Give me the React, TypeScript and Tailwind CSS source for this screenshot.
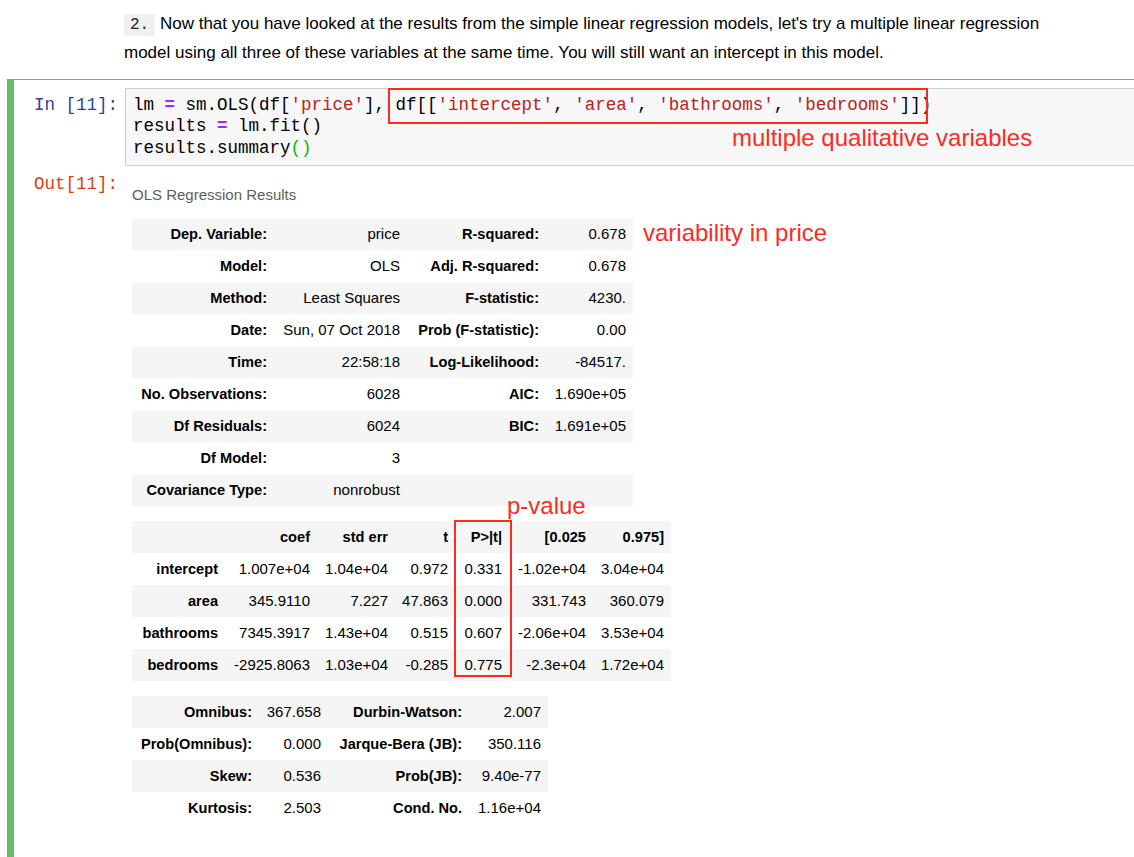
import React from "react";

const RED = "#fb2c1f";

const summaryTop: [string, string, string, string][] = [
  ["Dep. Variable:", "price", "R-squared:", "0.678"],
  ["Model:", "OLS", "Adj. R-squared:", "0.678"],
  ["Method:", "Least Squares", "F-statistic:", "4230."],
  ["Date:", "Sun, 07 Oct 2018", "Prob (F-statistic):", "0.00"],
  ["Time:", "22:58:18", "Log-Likelihood:", "-84517."],
  ["No. Observations:", "6028", "AIC:", "1.690e+05"],
  ["Df Residuals:", "6024", "BIC:", "1.691e+05"],
  ["Df Model:", "3", "", ""],
  ["Covariance Type:", "nonrobust", "", ""],
];

const coefHead = ["", "coef", "std err", "t", "P>|t|", "[0.025", "0.975]"];
const coefRows: string[][] = [
  ["intercept", "1.007e+04", "1.04e+04", "0.972", "0.331", "-1.02e+04", "3.04e+04"],
  ["area", "345.9110", "7.227", "47.863", "0.000", "331.743", "360.079"],
  ["bathrooms", "7345.3917", "1.43e+04", "0.515", "0.607", "-2.06e+04", "3.53e+04"],
  ["bedrooms", "-2925.8063", "1.03e+04", "-0.285", "0.775", "-2.3e+04", "1.72e+04"],
];

const diagRows: [string, string, string, string][] = [
  ["Omnibus:", "367.658", "Durbin-Watson:", "2.007"],
  ["Prob(Omnibus):", "0.000", "Jarque-Bera (JB):", "350.116"],
  ["Skew:", "0.536", "Prob(JB):", "9.40e-77"],
  ["Kurtosis:", "2.503", "Cond. No.", "1.16e+04"],
];

const th = "h-8 pr-[7px] text-right align-middle font-bold text-[14.6px] leading-[18px] whitespace-nowrap";
const td = "h-8 pr-[7px] text-right align-middle text-[15px] leading-[18px] whitespace-nowrap";

const Str = ({ children }: { children: React.ReactNode }) => (
  <span className="text-[#ba2121]">{children}</span>
);
const Op = ({ children }: { children: React.ReactNode }) => (
  <span className="text-[#aa22ff] font-bold">{children}</span>
);

const FourColTable = ({
  rows,
  widths,
}: {
  rows: [string, string, string, string][];
  widths: string[];
}) => (
  <table className="table-fixed border-collapse">
    <colgroup>
      {widths.map((w, i) => (
        <col key={i} className={w} />
      ))}
    </colgroup>
    <tbody>
      {rows.map((r, i) => (
        <tr key={i} className={i % 2 === 0 ? "bg-[#f5f5f5]" : "bg-white"}>
          <th className={th}>{r[0]}</th>
          <td className={td}>{r[1]}</td>
          <th className={th}>{r[2]}</th>
          <td className={td}>{r[3]}</td>
        </tr>
      ))}
    </tbody>
  </table>
);

export default function App() {
  return (
    <div className="h-[857px] overflow-hidden bg-white text-black font-['Liberation_Sans',Arial,sans-serif]">
      {/* markdown cell */}
      <p className="pl-[124px] pt-[10px] text-[17px] leading-[27px] whitespace-nowrap">
        <code className="bg-[#eff0f1] px-[6px] py-[2px] rounded-[2px] text-[16px] text-[#222] font-['Liberation_Mono',monospace]">
          2.
        </code>{" "}
        Now that you have looked at the results from the simple linear regression models, let's try a multiple linear regression
        <br />
        model using all three of these variables at the same time. You will still want an intercept in this model.
      </p>

      {/* code cell */}
      <div className="mt-[13px] ml-[7px] flex border-t border-[#66bb6a]">
        <div className="w-[7px] shrink-0 bg-[#66bb6a]" />
        <div className="flex-1 pt-[8px] pb-[60px]">
          <div className="flex">
            <div className="w-[111px] shrink-0 pr-[7px] pt-[7px] text-right font-['Liberation_Mono',monospace] text-[17.5px] leading-[21.25px] text-[#303f9f]">
              In [11]:
            </div>
            <div className="relative flex-1 rounded-l-[2px] border border-r-0 border-[#cfcfcf] bg-[#f7f7f7] px-[7px] py-[6px] font-['Liberation_Mono',monospace] text-[17.5px] leading-[21.25px] whitespace-pre">
              <div>
                lm <Op>=</Op> sm.OLS(df[<Str>'price'</Str>], df[[<Str>'intercept'</Str>, <Str>'area'</Str>,{" "}
                <Str>'bathrooms'</Str>, <Str>'bedrooms'</Str>]])
              </div>
              <div>
                results <Op>=</Op> lm.fit()
              </div>
              <div>
                results.summary<span className="text-[#00bb00]">()</span>
              </div>
              <div className="absolute left-[262px] top-[-1px] h-[36px] w-[540px] border-2 border-[#fb2c1f]" />
              <div
                className="absolute left-[606px] top-[35px] text-[24px] leading-[28px] font-['Liberation_Sans',Arial,sans-serif]"
                style={{ color: RED }}
              >
                multiple qualitative variables
              </div>
            </div>
          </div>

          <div className="mt-[8px] flex">
            <div className="w-[111px] shrink-0 pr-[7px] text-right font-['Liberation_Mono',monospace] text-[17.5px] leading-[21.25px] text-[#d84315]">
              Out[11]:
            </div>
            <div className="flex-1 pl-[7px] pt-[12px]">
              <div className="text-[15px] leading-[18px] text-[#5e5e5e]">OLS Regression Results</div>

              <div className="mt-[14px] flex items-start">
                <FourColTable rows={summaryTop} widths={["w-[142px]", "w-[133px]", "w-[139px]", "w-[87px]"]} />
                <div className="ml-[10px] mt-[1px] text-[24px] leading-[28px]" style={{ color: RED }}>
                  variability in price
                </div>
              </div>

              <div className="relative mt-[15px] w-fit">
                <table className="table-fixed border-collapse">
                  <colgroup>
                    {["w-[93px]", "w-[92px]", "w-[78px]", "w-[60px]", "w-[54px]", "w-[84px]", "w-[78px]"].map((w, i) => (
                      <col key={i} className={w} />
                    ))}
                  </colgroup>
                  <tbody>
                    <tr className="bg-[#f5f5f5]">
                      {coefHead.map((h, i) => (
                        <th key={i} className={th}>
                          {h}
                        </th>
                      ))}
                    </tr>
                    {coefRows.map((r, i) => (
                      <tr key={i} className={i % 2 === 0 ? "bg-white" : "bg-[#f5f5f5]"}>
                        <th className={th}>{r[0]}</th>
                        {r.slice(1).map((c, j) => (
                          <td key={j} className={td}>
                            {c}
                          </td>
                        ))}
                      </tr>
                    ))}
                  </tbody>
                </table>
                <div className="absolute left-[322px] top-[-1px] h-[157px] w-[58px] border-2 border-[#fb2c1f]" />
                <div className="absolute left-[375px] top-[-29px] text-[24px] leading-[28px]" style={{ color: RED }}>
                  p-value
                </div>
              </div>

              <div className="mt-[15px]">
                <FourColTable rows={diagRows} widths={["w-[127px]", "w-[69px]", "w-[141px]", "w-[79px]"]} />
              </div>
            </div>
          </div>
        </div>
      </div>
    </div>
  );
}
